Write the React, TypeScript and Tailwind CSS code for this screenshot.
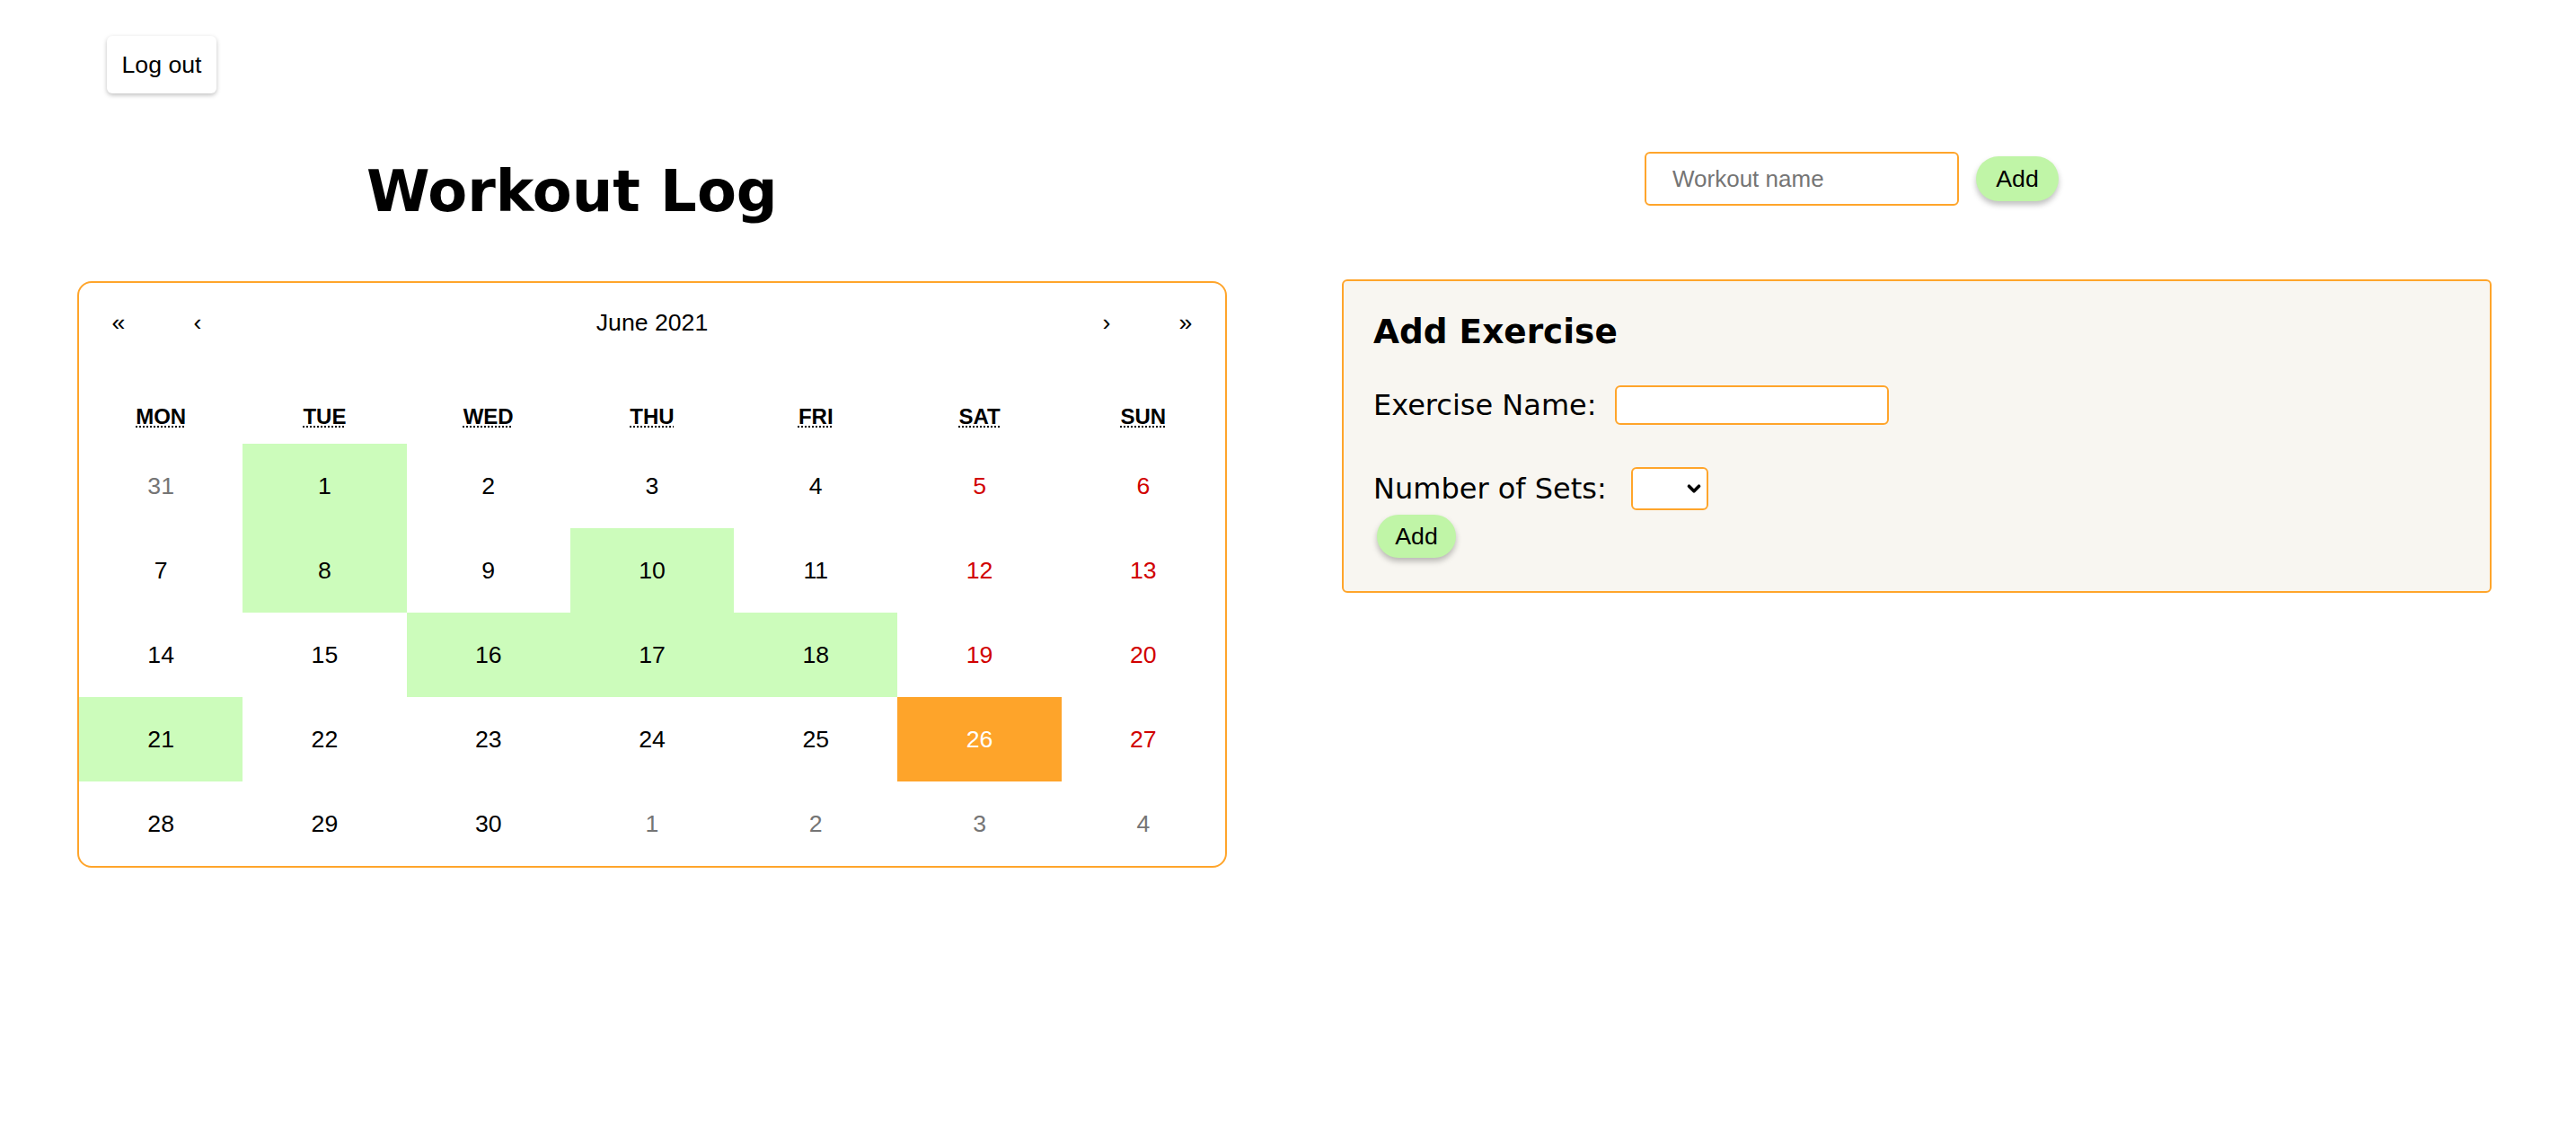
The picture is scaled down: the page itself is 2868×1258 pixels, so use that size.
import React from "react";
import { ChevronDown } from "lucide-react";

type Day = { n: number; other?: boolean; done?: boolean; active?: boolean };

const WEEKDAYS = [
  { short: "Mon", long: "Monday" },
  { short: "Tue", long: "Tuesday" },
  { short: "Wed", long: "Wednesday" },
  { short: "Thu", long: "Thursday" },
  { short: "Fri", long: "Friday" },
  { short: "Sat", long: "Saturday" },
  { short: "Sun", long: "Sunday" },
];

const workoutDays = [1, 8, 10, 16, 17, 18, 21];

const days: Day[] = [
  { n: 31, other: true },
  ...Array.from({ length: 30 }, (_, i) => ({
    n: i + 1,
    done: workoutDays.includes(i + 1),
    active: i + 1 === 26,
  })),
  { n: 1, other: true },
  { n: 2, other: true },
  { n: 3, other: true },
  { n: 4, other: true },
];

const Calendar = () => {
  return (
    <div className="w-[1280px] rounded-[16px] border-2 border-[#ffa52b] bg-white font-['Liberation_Sans',Arial,sans-serif]">
      <div className="flex h-[88px] items-center text-[26.67px] text-black mb-[28px]">
        <button className="h-[88px] w-[88px]">«</button>
        <button className="h-[88px] w-[88px]">‹</button>
        <button className="h-[88px] flex-1">June 2021</button>
        <button className="h-[88px] w-[88px]">›</button>
        <button className="h-[88px] w-[88px]">»</button>
      </div>
      <div className="grid h-[63px] grid-cols-7 items-center text-center text-[24px] font-bold uppercase">
        {WEEKDAYS.map((d) => (
          <div key={d.short} className="pt-[2px]">
            <abbr title={d.long} className="underline decoration-dotted underline-offset-[3px] decoration-[2px]">
              {d.short}
            </abbr>
          </div>
        ))}
      </div>
      <div className="grid grid-cols-7 overflow-hidden rounded-b-[14px]">
        {days.map((d, i) => {
          const col = i % 7;
          const weekend = col >= 5;
          let cls = "text-black";
          if (d.other) cls = "text-[#757575]";
          else if (d.active) cls = "bg-[#fea42a] text-white";
          else if (d.done) cls = "bg-[#ccfcbb] text-black";
          else if (weekend) cls = "text-[#d10000]";
          return (
            <button
              key={i}
              className={`flex h-[94px] items-center justify-center text-[26.67px] ${cls}`}
            >
              {d.n}
            </button>
          );
        })}
      </div>
    </div>
  );
};

const AddExercise = () => {
  return (
    <div className="w-[1280px] rounded-[6px] border-2 border-[#ffa52b] bg-[#f8f6f1] pl-[33px] pt-[34px] pb-[37px]">
      <h3 className="text-[37.44px] font-bold leading-[44px] text-black">Add Exercise</h3>
      <div className="mt-[36px] flex items-center gap-[20px]">
        <label className="text-[32px] text-black">Exercise Name:</label>
        <input
          type="text"
          className="h-[44px] w-[305px] rounded-[6px] border-2 border-[#ffa52b] bg-white px-[6px] text-[26px] outline-none"
        />
      </div>
      <div className="mt-[45px] flex items-center gap-[27px]">
        <label className="text-[32px] text-black">Number of Sets:</label>
        <div className="relative">
          <select className="h-[48px] w-[86px] appearance-none rounded-[6px] border-2 border-[#ffa52b] bg-white outline-none" />
          <ChevronDown
            className="pointer-events-none absolute right-[5px] top-[13px] text-black"
            size={22}
            strokeWidth={4}
          />
        </div>
      </div>
      <button className="mt-[5px] ml-[4px] h-[48px] w-[88px] rounded-full bg-[#c0f5a7] font-['Liberation_Sans',Arial,sans-serif] text-[26.67px] text-black shadow-[0_4px_6px_rgba(0,0,0,0.25)]">
        Add
      </button>
    </div>
  );
};

export default function App() {
  return (
    <div className="min-h-[1258px] w-full bg-white font-['DejaVu_Sans',Verdana,sans-serif]">
      <div className="pl-[119px] pt-[40px]">
        <button className="h-[64px] w-[122px] rounded-[6px] bg-white font-['Liberation_Sans',Arial,sans-serif] text-[26.67px] text-black shadow-[0_2px_5px_rgba(0,0,0,0.25)]">
          Log out
        </button>
      </div>
      <div className="flex">
        <div className="pl-[86px]">
          <h1 className="ml-[322px] mt-[72px] mb-[62px] text-[64px] font-bold leading-[75px] text-black">
            Workout Log
          </h1>
          <Calendar />
        </div>
        <div className="ml-[128px]">
          <div className="ml-[337px] mt-[65px] flex items-center gap-[19px]">
            <input
              type="text"
              placeholder="Workout name"
              className="h-[60px] w-[350px] rounded-[6px] border-2 border-[#ffa52b] bg-white pl-[29px] font-['Liberation_Sans',Arial,sans-serif] text-[26px] text-black outline-none placeholder:text-[#757575]"
            />
            <button className="h-[50px] w-[92px] rounded-full bg-[#c0f5a7] font-['Liberation_Sans',Arial,sans-serif] text-[26.67px] text-black shadow-[0_4px_6px_rgba(0,0,0,0.25)]">
              Add
            </button>
          </div>
          <div className="mt-[82px]">
            <AddExercise />
          </div>
        </div>
      </div>
    </div>
  );
}
